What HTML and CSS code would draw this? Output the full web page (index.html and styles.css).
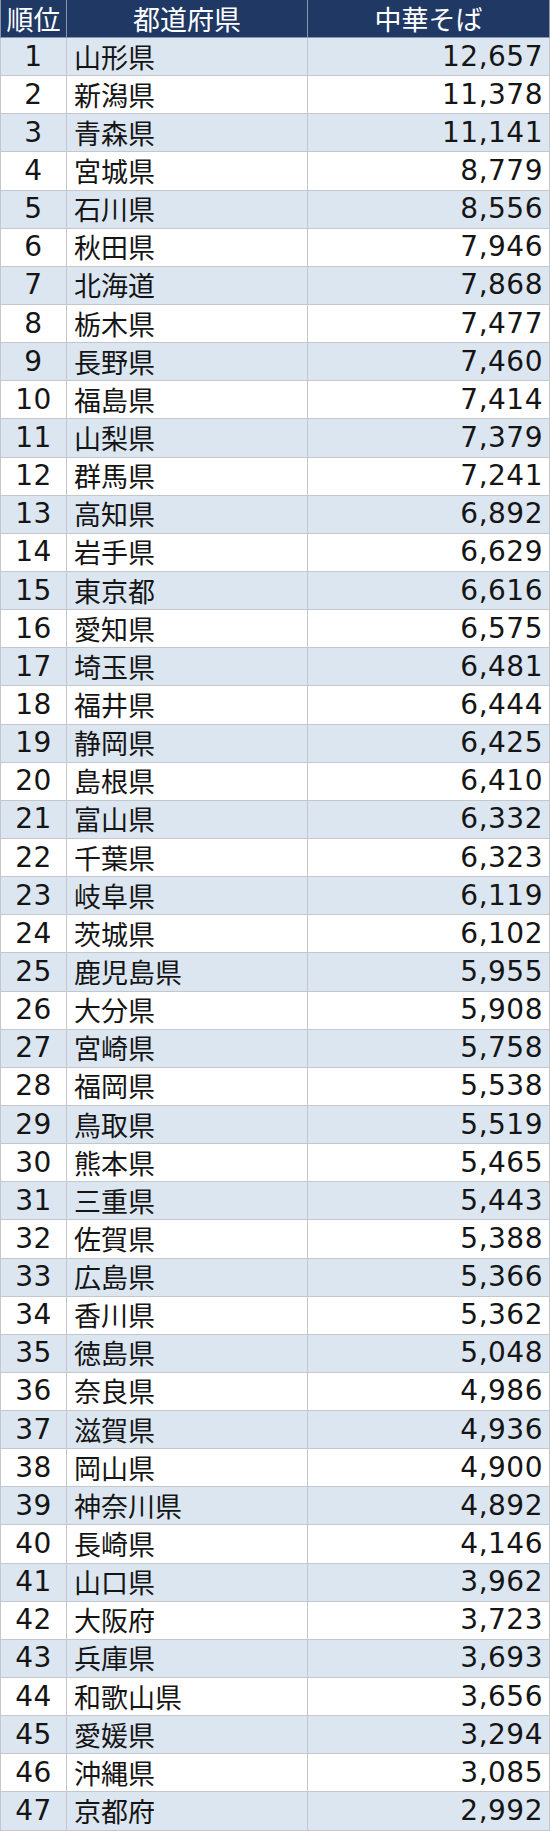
FILE: index.html
```html
<!DOCTYPE html>
<html lang="ja">
<head>
<meta charset="utf-8">
<title>中華そば</title>
<link rel="stylesheet" href="styles.css">
</head>
<body>
<table class="rank">
<colgroup><col class="c-rank"><col class="c-pref"><col class="c-val"></colgroup>
<thead>
<tr><th>順位</th><th>都道府県</th><th>中華そば</th></tr>
</thead>
<tbody>
<tr><td class="n">1</td><td class="p">山形県</td><td class="v">12,657</td></tr>
<tr><td class="n">2</td><td class="p">新潟県</td><td class="v">11,378</td></tr>
<tr><td class="n">3</td><td class="p">青森県</td><td class="v">11,141</td></tr>
<tr><td class="n">4</td><td class="p">宮城県</td><td class="v">8,779</td></tr>
<tr><td class="n">5</td><td class="p">石川県</td><td class="v">8,556</td></tr>
<tr><td class="n">6</td><td class="p">秋田県</td><td class="v">7,946</td></tr>
<tr><td class="n">7</td><td class="p">北海道</td><td class="v">7,868</td></tr>
<tr><td class="n">8</td><td class="p">栃木県</td><td class="v">7,477</td></tr>
<tr><td class="n">9</td><td class="p">長野県</td><td class="v">7,460</td></tr>
<tr><td class="n">10</td><td class="p">福島県</td><td class="v">7,414</td></tr>
<tr><td class="n">11</td><td class="p">山梨県</td><td class="v">7,379</td></tr>
<tr><td class="n">12</td><td class="p">群馬県</td><td class="v">7,241</td></tr>
<tr><td class="n">13</td><td class="p">高知県</td><td class="v">6,892</td></tr>
<tr><td class="n">14</td><td class="p">岩手県</td><td class="v">6,629</td></tr>
<tr><td class="n">15</td><td class="p">東京都</td><td class="v">6,616</td></tr>
<tr><td class="n">16</td><td class="p">愛知県</td><td class="v">6,575</td></tr>
<tr><td class="n">17</td><td class="p">埼玉県</td><td class="v">6,481</td></tr>
<tr><td class="n">18</td><td class="p">福井県</td><td class="v">6,444</td></tr>
<tr><td class="n">19</td><td class="p">静岡県</td><td class="v">6,425</td></tr>
<tr><td class="n">20</td><td class="p">島根県</td><td class="v">6,410</td></tr>
<tr><td class="n">21</td><td class="p">富山県</td><td class="v">6,332</td></tr>
<tr><td class="n">22</td><td class="p">千葉県</td><td class="v">6,323</td></tr>
<tr><td class="n">23</td><td class="p">岐阜県</td><td class="v">6,119</td></tr>
<tr><td class="n">24</td><td class="p">茨城県</td><td class="v">6,102</td></tr>
<tr><td class="n">25</td><td class="p">鹿児島県</td><td class="v">5,955</td></tr>
<tr><td class="n">26</td><td class="p">大分県</td><td class="v">5,908</td></tr>
<tr><td class="n">27</td><td class="p">宮崎県</td><td class="v">5,758</td></tr>
<tr><td class="n">28</td><td class="p">福岡県</td><td class="v">5,538</td></tr>
<tr><td class="n">29</td><td class="p">鳥取県</td><td class="v">5,519</td></tr>
<tr><td class="n">30</td><td class="p">熊本県</td><td class="v">5,465</td></tr>
<tr><td class="n">31</td><td class="p">三重県</td><td class="v">5,443</td></tr>
<tr><td class="n">32</td><td class="p">佐賀県</td><td class="v">5,388</td></tr>
<tr><td class="n">33</td><td class="p">広島県</td><td class="v">5,366</td></tr>
<tr><td class="n">34</td><td class="p">香川県</td><td class="v">5,362</td></tr>
<tr><td class="n">35</td><td class="p">徳島県</td><td class="v">5,048</td></tr>
<tr><td class="n">36</td><td class="p">奈良県</td><td class="v">4,986</td></tr>
<tr><td class="n">37</td><td class="p">滋賀県</td><td class="v">4,936</td></tr>
<tr><td class="n">38</td><td class="p">岡山県</td><td class="v">4,900</td></tr>
<tr><td class="n">39</td><td class="p">神奈川県</td><td class="v">4,892</td></tr>
<tr><td class="n">40</td><td class="p">長崎県</td><td class="v">4,146</td></tr>
<tr><td class="n">41</td><td class="p">山口県</td><td class="v">3,962</td></tr>
<tr><td class="n">42</td><td class="p">大阪府</td><td class="v">3,723</td></tr>
<tr><td class="n">43</td><td class="p">兵庫県</td><td class="v">3,693</td></tr>
<tr><td class="n">44</td><td class="p">和歌山県</td><td class="v">3,656</td></tr>
<tr><td class="n">45</td><td class="p">愛媛県</td><td class="v">3,294</td></tr>
<tr><td class="n">46</td><td class="p">沖縄県</td><td class="v">3,085</td></tr>
<tr><td class="n">47</td><td class="p">京都府</td><td class="v">2,992</td></tr>
</tbody>
</table>
</body>
</html>
```

FILE: styles.css
```css
html, body {
  margin: 0;
  padding: 0;
  background: #ffffff;
}

.rank {
  border-collapse: collapse;
  table-layout: fixed;
  width: 549px;
  font-family: "Noto Sans CJK JP", "Noto Sans", sans-serif;
  color: #151515;
}

.c-rank { width: 66px; }
.c-pref { width: 241px; }
.c-val  { width: 242px; }

.rank th {
  height: 37px;
  padding: 0;
  background: #203864;
  color: #ffffff;
  font-weight: normal;
  font-size: 27px;
  line-height: 37px;
  text-align: center;
  border: 1px solid #8a96ad;
  border-top: 0;
  box-sizing: border-box;
}

.rank td {
  height: 38.15px;
  padding: 0;
  font-size: 27px;
  line-height: 36px;
  border: 1px solid #c4c7cc;
  box-sizing: border-box;
  white-space: nowrap;
  vertical-align: middle;
}

.rank tbody tr:nth-child(odd) td {
  background: #dce6f1;
}

.rank .n {
  text-align: center;
  font-family: "DejaVu Sans", "Noto Sans", sans-serif;
  font-size: 28px;
  letter-spacing: 0.5px;
}

.rank .p {
  text-align: left;
  padding-left: 7px;
}

.rank .v {
  text-align: right;
  padding-right: 6px;
  font-family: "DejaVu Sans", "Noto Sans", sans-serif;
  font-size: 28px;
  letter-spacing: 0.5px;
}
```
